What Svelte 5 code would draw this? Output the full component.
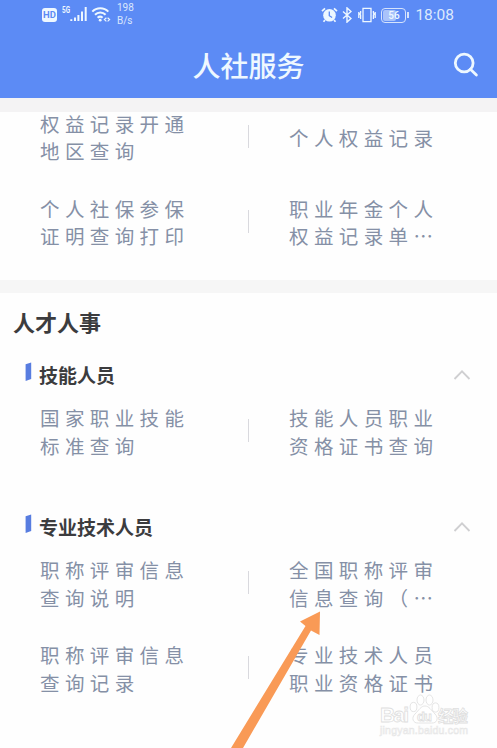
<script lang="ts">
  type Row = [string[], string[]];

  const records: Row[] = [
    [['权益记录开通', '地区查询'], ['个人权益记录']],
    [['个人社保参保', '证明查询打印'], ['职业年金个人', '权益记录单…']],
  ];

  const groups: { name: string; rows: Row[] }[] = [
    {
      name: '技能人员',
      rows: [[['国家职业技能', '标准查询'], ['技能人员职业', '资格证书查询']]],
    },
    {
      name: '专业技术人员',
      rows: [
        [['职称评审信息', '查询说明'], ['全国职称评审', '信息查询（…']],
        [['职称评审信息', '查询记录'], ['专业技术人员', '职业资格证书']],
      ],
    },
  ];
</script>

{#snippet serviceRow(row: Row)}
  <div class="row">
    {#each row as lines}
      <div class="cell">
        {#each lines as line}
          <span>{line}</span>
        {/each}
      </div>
    {/each}
  </div>
{/snippet}

<div class="screen">
  <header>
    <div class="status">
      <div class="status-left">
        <span class="hd">HD</span>
        <svg class="signal" width="26" height="18" viewBox="0 0 26 18" aria-hidden="true">
          <text x="0" y="7.5" textLength="8" lengthAdjust="spacingAndGlyphs">5G</text>
          <path d="M9.3 14.2v1.8M13 12.5V16M16.4 10V16M20 6.5V16M23.7 2V16" />
        </svg>
        <svg class="wifi" width="20" height="18" viewBox="0 0 20 18" aria-hidden="true">
          <path d="M1.3 6.6a11 11 0 0 1 16 0M4 9.8a7.2 7.2 0 0 1 10.6 0M6.6 12.7a3.8 3.8 0 0 1 5 0" />
          <circle cx="9.2" cy="15.2" r="1.4" />
          <path class="data" d="M15.4 12.8l-2 1.8 2 1.8M16.6 12.8l2 1.8-2 1.8" />
        </svg>
        <span class="speed"><span>198</span><span>B/s</span></span>
      </div>
      <div class="status-right">
        <svg width="17" height="16" viewBox="0 0 17 16" aria-hidden="true">
          <circle cx="8.5" cy="8.3" r="6.3" fill="#eef8ff" />
          <path d="M1 4.2L4 1.3M13 1.3l3 2.9M4 13l-1.5 1.8M13 13l1.5 1.8" stroke="#eef8ff" stroke-width="1.7" />
          <path d="M8.3 4.5v4.2l2.8 1.8" fill="none" stroke="#5c8bf5" stroke-width="1.3" />
        </svg>
        <svg class="bt" width="10" height="16" viewBox="0 0 10 16" aria-hidden="true">
          <path d="M1 4.4l8 7.1-4 3.6V.9l4 3.6-8 7.1" />
        </svg>
        <svg class="vibrate" width="18" height="16" viewBox="0 0 18 16" aria-hidden="true">
          <path d="M5 1.3h8v13.4H5zM2.6 4v2l-.8 1 .8 1v4M.8 5v6M15.4 4v2l.8 1-.8 1v4M17.2 5v6" />
        </svg>
        <span class="battery"><i></i><b>56</b></span>
        <span class="time">18:08</span>
      </div>
    </div>
    <div class="nav">
      <h1>人社服务</h1>
      <svg class="search" width="26" height="26" viewBox="0 0 26 26" aria-hidden="true">
        <circle cx="11.2" cy="11" r="8.9" />
        <path d="M17.4 17.2l6 5.8" />
      </svg>
    </div>
  </header>

  <main>
    <section class="records">
      {#each records as row}
        {@render serviceRow(row)}
      {/each}
    </section>

    <section class="talent">
      <h2>人才人事</h2>
      {#each groups as group}
        <div class="group">
          <div class="group-head">
            <svg class="mark" width="7" height="20" viewBox="0 0 7 20" aria-hidden="true">
              <path d="M.6 2.2L6.2.5V17L.6 19z" />
            </svg>
            <h3>{group.name}</h3>
            <svg class="chevron" width="18" height="12" viewBox="0 0 18 12" aria-hidden="true">
              <path d="M1.5 10L9 2.3l7.5 7.7" />
            </svg>
          </div>
          {#each group.rows as row}
            {@render serviceRow(row)}
          {/each}
        </div>
      {/each}
    </section>
  </main>

  <!-- pointer towards the national review lookup -->
  <svg class="arrow" width="100" height="142" viewBox="0 0 100 142" aria-hidden="true">
    <path d="M90 5.5L70 15.5l5.500 4.500L1 142h12L81 24.500l8.500 4.500z" />
  </svg>

  <div class="watermark">
    <svg width="92" height="46" viewBox="0 0 92 46" aria-hidden="true">
      <g class="paw">
        <ellipse cx="34.5" cy="14" rx="3.4" ry="4.6" />
        <ellipse cx="41.5" cy="7" rx="3.5" ry="5" />
        <ellipse cx="50.5" cy="7" rx="3.5" ry="5" />
        <ellipse cx="56.5" cy="14.500" rx="3.4" ry="4.6" />
        <path d="M46 13c4 0 6 4 10 8 4 4 2 9.500-3.500 9h-13c-5.500.5-7.500-5-3.500-9 4-4 6-8 10-8z" />
      </g>
      <text class="brand" x="1" y="29" textLength="29">Bai</text>
      <text class="du" x="38" y="27.5" textLength="15">du</text>
      <text class="cn" x="59" y="28.5" textLength="30">经验</text>
      <text class="url" x="1" y="41" textLength="88">jingyan.baidu.com</text>
    </svg>
  </div>
</div>

<style>
  :global(body) {
    margin: 0;
  }

  .screen {
    position: relative;
    display: flex;
    flex-direction: column;
    width: 497px;
    height: 748px;
    overflow: hidden;
    background: #fefefe;
    font-family: 'Noto Sans CJK SC', sans-serif;
  }

  h1,
  h2,
  h3 {
    margin: 0;
  }

  header {
    flex: none;
    height: 98px;
    background: #5c8bf5;
    color: #eef8ff;
  }

  .status {
    display: flex;
    justify-content: space-between;
    height: 30px;
    padding: 0 43px 0 42px;
    font-family: Roboto, sans-serif;
  }

  .status-left,
  .status-right {
    display: flex;
    align-items: center;
  }

  .hd {
    width: 15px;
    height: 14px;
    border-radius: 3px;
    background: #eef8ff;
    color: #5c8bf5;
    font-size: 9.5px;
    font-weight: 700;
    line-height: 14px;
    text-align: center;
  }

  .signal {
    margin: -2px 0 0 5px;
    fill: none;
    stroke: #eef8ff;
    stroke-width: 2;
  }

  .signal text {
    fill: #eef8ff;
    stroke: none;
    font-size: 8.5px;
    font-weight: 700;
  }

  .wifi {
    margin: -2px 0 0 3px;
    fill: none;
    stroke: #eef8ff;
    stroke-width: 2;
  }

  .wifi circle {
    fill: #eef8ff;
    stroke: none;
  }

  .wifi .data {
    stroke-width: 1.2;
  }

  .speed {
    display: flex;
    flex-direction: column;
    margin: -1px 0 0 6px;
    font-size: 10px;
    line-height: 12.5px;
    opacity: 0.85;
  }

  .bt {
    margin-left: 4px;
    fill: none;
    stroke: #eef8ff;
    stroke-width: 1.4;
  }

  .vibrate {
    margin-left: 6px;
    fill: none;
    stroke: #eef8ff;
    stroke-width: 1.3;
  }

  .battery {
    position: relative;
    box-sizing: border-box;
    width: 25px;
    height: 15px;
    margin: 0 4px 0 5px;
    border: 1.5px solid #d5e3fc;
    border-radius: 4px;
    line-height: 13px;
    text-align: center;
  }

  .battery::after {
    content: '';
    position: absolute;
    top: 3px;
    right: -4px;
    width: 2px;
    height: 6px;
    background: #d5e3fc;
  }

  .battery i {
    position: absolute;
    inset: 1px 9px 1px 1px;
    border-radius: 2px;
    background: #a9c3fa;
  }

  .battery b {
    position: relative;
    display: block;
    font-size: 10px;
    font-weight: 500;
  }

  .time {
    margin-left: 5px;
    font-size: 15.5px;
    color: #dce9fd;
  }

  .nav {
    display: grid;
    grid-template-columns: 1fr auto 1fr;
    align-items: center;
    height: 70px;
  }

  h1 {
    grid-column: 2;
    font-size: 28px;
    font-weight: 500;
    line-height: 40px;
  }

  .search {
    justify-self: end;
    margin: -1px 18px 0 0;
    fill: none;
    stroke: #eef8ff;
    stroke-width: 2.8;
    stroke-linecap: round;
  }

  main {
    flex: 1;
    min-height: 0;
    overflow: hidden;
    border-top: 14px solid #f4f3f4;
  }

  .records {
    margin-top: -17px;
    padding-bottom: 15.5px;
    border-bottom: 13px solid #f6f6f6;
  }

  .row {
    display: grid;
    grid-template-columns: 248px 249px;
    align-items: center;
    height: 84.7px;
  }

  .cell {
    display: flex;
    flex-direction: column;
    justify-content: center;
    height: 55px;
    padding-left: 40px;
    color: #8590a6;
    font-size: 19.5px;
    letter-spacing: 5.4px;
    line-height: 27.5px;
    white-space: nowrap;
  }

  .cell + .cell {
    padding-left: 41px;
    background: linear-gradient(#d9d9de, #d9d9de) 0 15px / 1px 23px no-repeat;
  }

  h2 {
    padding-left: 13px;
    color: #3c3c3e;
    font-size: 22px;
    font-weight: 700;
    line-height: 56px;
  }

  .group {
    margin-top: 11px;
  }

  .group + .group {
    margin-top: 38px;
  }

  .group-head {
    display: flex;
    align-items: center;
    height: 29.5px;
    padding: 0 26px 0 25px;
  }

  .mark {
    margin: -6px 7px 0 0;
    fill: #587de0;
  }

  h3 {
    flex: 1;
    color: #3c3c3e;
    font-size: 19px;
    font-weight: 700;
    line-height: 29px;
  }

  .chevron {
    margin-top: 1px;
    fill: none;
    stroke: #cfcfd1;
    stroke-width: 1.8;
  }

  .arrow {
    position: absolute;
    left: 230px;
    bottom: 0;
    fill: #f99a56;
  }

  .watermark {
    position: absolute;
    left: 379px;
    top: 693px;
    height: 46px;
  }

  .watermark svg {
    overflow: visible;
    fill: #fff;
    stroke: #dedede;
    stroke-width: 0.8;
  }

  .brand {
    font: 700 21px 'Liberation Sans', sans-serif;
  }

  .du {
    font: 700 13px 'Liberation Sans', sans-serif;
  }

  .cn {
    font-size: 15.5px;
    font-weight: 700;
  }

  .url {
    font: 10.5px 'Liberation Sans', sans-serif;
    stroke: #e6e6e6;
    stroke-width: 0.6;
  }
</style>
